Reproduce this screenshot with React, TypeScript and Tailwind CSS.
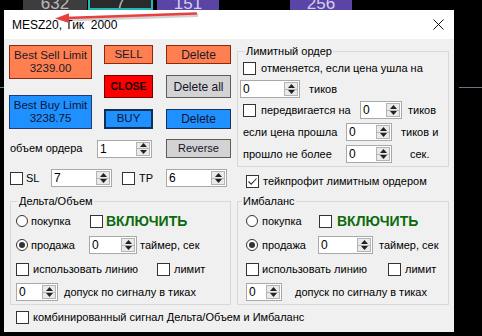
import React from 'react';

const Checkbox = ({ checked = false }: { checked?: boolean }) => (
  <span className="flex h-[13px] w-[13px] shrink-0 items-center justify-center border border-[#333333] bg-white">
    {checked && (
      <svg width="11" height="11" viewBox="0 0 11 11">
        <path d="M1.5 5.5 L4.2 8.2 L9.5 2.5" fill="none" stroke="#333333" strokeWidth="1.1" />
      </svg>
    )}
  </span>
);

const Radio = ({ checked = false }: { checked?: boolean }) => (
  <span className="flex h-[12px] w-[12px] shrink-0 items-center justify-center rounded-full border border-[#333333] bg-white">
    {checked && <span className="h-[6px] w-[6px] rounded-full bg-[#333333]" />}
  </span>
);

const Spin = ({ value, className }: { value: string; className: string }) => (
  <div className={`flex h-[18px] shrink-0 border border-[#a9a9a9] bg-white ${className}`}>
    <div className="flex-1 pl-[2px] text-[12px] leading-[16px] text-black">{value}</div>
    <div className="my-[1px] mr-[1px] flex w-[14px] flex-col border border-[#b4b4b4] bg-[#eaeaea]">
      <div className="flex flex-1 items-center justify-center border-b border-[#b4b4b4]">
        <svg width="7" height="4" viewBox="0 0 7 4"><polygon points="0,4 7,4 3.5,0" fill="#222" /></svg>
      </div>
      <div className="flex flex-1 items-center justify-center">
        <svg width="7" height="4" viewBox="0 0 7 4"><polygon points="0,0 7,0 3.5,4" fill="#222" /></svg>
      </div>
    </div>
  </div>
);

const Label = ({ children, className = '' }: { children: React.ReactNode; className?: string }) => (
  <span className={`shrink-0 whitespace-nowrap text-[11px] leading-[13px] text-black ${className}`}>{children}</span>
);

const Enable = ({ className = '' }: { className?: string }) => (
  <span className={`whitespace-nowrap text-[14px] font-bold leading-[16px] text-[#0b6b0b] ${className}`}>ВКЛЮЧИТЬ</span>
);

export default function App() {
  return (
    <div className="relative h-[336px] w-[482px] overflow-hidden bg-black font-['Liberation_Sans',Arial,sans-serif]">
      {/* chart strip behind the window */}
      <div className="flex h-[10px]">
        <div className="w-[23px]" />
        <div className="flex w-[64px] justify-center overflow-hidden bg-[#3d3d3d]">
          <span className="-mt-[5px] text-[17px] leading-none text-[#b9b9b9]">632</span>
        </div>
        <div className="ml-[1px] flex w-[65px] justify-center overflow-hidden border-x-2 border-b-2 border-[#22b8b8] bg-[#2a2a2a]">
          <span className="-mt-[5px] text-[17px] leading-none text-[#b9b9b9]">7</span>
        </div>
        <div className="ml-[4px] flex w-[62px] justify-center overflow-hidden bg-[#5a44a6]">
          <span className="-mt-[5px] text-[17px] leading-none text-[#d4d0ee]">151</span>
        </div>
        <div className="ml-[71px] flex w-[62px] justify-center overflow-hidden bg-[#5a44a6]">
          <span className="-mt-[5px] text-[17px] leading-none text-[#d4d0ee]">256</span>
        </div>
      </div>

      <div className="flex h-[322px]">
        <div className="w-[4px]">
          <div className="mt-[77px] h-px bg-[#6b7785]" />
        </div>

        {/* window */}
        <div className="flex w-[450px] flex-col">
          <div className="flex h-[29px] items-center bg-white pl-[8px] pr-[10px]">
            <span className="whitespace-pre text-[12px] text-black">MESZ20, Тик  2000</span>
            <svg className="ml-auto" width="11" height="11" viewBox="0 0 11 11">
              <path d="M0.5 0.5 L10.5 10.5 M10.5 0.5 L0.5 10.5" stroke="#111" strokeWidth="1" />
            </svg>
          </div>

          <div className="flex h-[293px] flex-col bg-[#f0f0f0] pl-[5px] pt-[6px]">
            {/* top section */}
            <div className="flex h-[145px]">
              {/* left column */}
              <div className="flex w-[222px] flex-col">
                <div className="flex h-[84px]">
                  <div className="flex w-[83px] flex-col">
                    <div className="flex h-[34px] flex-col items-center justify-center border border-[#8a2a0a] bg-[#ff7f50] text-[11.5px] leading-[13px] text-[#1a1a2a]">
                      <span>Best Sell Limit</span>
                      <span>3239.00</span>
                    </div>
                    <div className="mt-[16px] flex h-[34px] flex-col items-center justify-center border border-[#1c3d6e] bg-[#1e90ff] text-[11.5px] leading-[13px] text-[#0e1530]">
                      <span>Best Buy Limit</span>
                      <span>3238.75</span>
                    </div>
                  </div>
                  <div className="ml-[12px] flex w-[49px] flex-col">
                    <div className="flex h-[19px] items-center justify-center border border-[#8a2a0a] bg-[#ff7f50] text-[11.5px] text-[#1a1a2a]">SELL</div>
                    <div className="mt-[11px] flex h-[23px] items-center justify-center border border-[#7a0000] bg-[#ff0000] text-[10.5px] font-bold text-[#1a0000]">CLOSE</div>
                    <div className="mt-[11px] flex h-[20px] items-center justify-center border-2 border-[#0f2f57] bg-[#1e90ff] text-[11.5px] text-[#0e1530]">BUY</div>
                  </div>
                  <div className="ml-[13px] flex w-[65px] flex-col">
                    <div className="flex h-[19px] items-center justify-center border border-[#8a2a0a] bg-[#ff7f50] text-[12px] text-[#1a1a2a]">Delete</div>
                    <div className="mt-[11px] flex h-[23px] items-center justify-center border-[1.5px] border-[#5c5c5c] bg-[#d3d3d3] text-[12px] text-[#14142a]">Delete all</div>
                    <div className="mt-[11px] flex h-[20px] items-center justify-center border border-[#1c3050] bg-[#1e90ff] text-[12px] text-[#0e1530]">Delete</div>
                  </div>
                </div>

                <div className="mt-[10px] flex h-[19px] items-center">
                  <Label className="w-[88px] pl-[1px]">объем ордера</Label>
                  <Spin value="1" className="w-[55px]" />
                  <div className="ml-[14px] flex h-[19px] w-[65px] items-center justify-center border-[1.5px] border-[#5c5c5c] bg-[#d3d3d3] text-[11px] text-[#14142a]">Reverse</div>
                </div>

                <div className="mt-[11px] flex h-[18px] items-center">
                  <span className="ml-[1px]"><Checkbox /></span>
                  <Label className="ml-[3px] w-[25px]">SL</Label>
                  <Spin value="7" className="w-[61px]" />
                  <span className="ml-[10px]"><Checkbox /></span>
                  <Label className="ml-[4px] w-[27px]">TP</Label>
                  <Spin value="6" className="w-[61px]" />
                </div>
              </div>

              {/* right column */}
              <div className="ml-[6px] flex w-[212px] flex-col">
                <fieldset className="border border-[#d8d8d8] pb-[3px]">
                  <legend className="ml-[7px] px-[1px] text-[11px] leading-[13px] text-black">Лимитный ордер</legend>
                  <div className="mt-[1px] flex h-[18px] items-center">
                    <span className="ml-[5px]"><Checkbox /></span>
                    <Label className="ml-[5px]">отменяется, если цена ушла на</Label>
                  </div>
                  <div className="mt-[3px] flex h-[18px] items-center">
                    <Spin value="0" className="ml-[2px] w-[60px]" />
                    <Label className="ml-[9px]">тиков</Label>
                  </div>
                  <div className="mt-[3px] flex h-[18px] items-center">
                    <span className="ml-[5px]"><Checkbox /></span>
                    <Label className="ml-[5px] w-[99px]">передвигается на</Label>
                    <Spin value="0" className="w-[42px]" />
                    <Label className="ml-[6px]">тиков</Label>
                  </div>
                  <div className="mt-[4px] flex h-[18px] items-center">
                    <Label className="ml-[5px] w-[103px]">если цена прошла</Label>
                    <Spin value="0" className="w-[46px]" />
                    <Label className="ml-[9px]">тиков и</Label>
                  </div>
                  <div className="mt-[4px] flex h-[18px] items-center">
                    <Label className="ml-[5px] w-[103px]">прошло не более</Label>
                    <Spin value="0" className="w-[46px]" />
                    <Label className="ml-[18px]">сек.</Label>
                  </div>
                </fieldset>
                <div className="mt-[5px] flex h-[18px] items-center">
                  <span className="ml-[9px]"><Checkbox checked /></span>
                  <Label className="ml-[4px]">тейкпрофит лимитным ордером</Label>
                </div>
              </div>
            </div>

            {/* bottom groups */}
            <div className="mt-[5px] flex">
              <fieldset className="ml-[1px] w-[221px] border border-[#d8d8d8] pb-[3px]">
                <legend className="ml-[7px] px-[1px] text-[11px] leading-[13px] text-black">Дельта/Объем</legend>
                <div className="mt-[4px] flex h-[18px] items-center">
                  <span className="ml-[5px]"><Radio /></span>
                  <Label className="ml-[3px] w-[59px]">покупка</Label>
                  <Checkbox />
                  <Enable className="ml-[3px]" />
                </div>
                <div className="mt-[6px] flex h-[18px] items-center">
                  <span className="ml-[5px]"><Radio checked /></span>
                  <Label className="ml-[3px] w-[58px]">продажа</Label>
                  <Spin value="0" className="w-[48px]" />
                  <Label className="ml-[3px]">таймер, сек</Label>
                </div>
                <div className="mt-[6px] flex h-[18px] items-center">
                  <span className="ml-[5px]"><Checkbox /></span>
                  <Label className="ml-[4px] w-[124px]">использовать линию</Label>
                  <Checkbox />
                  <Label className="ml-[4px]">лимит</Label>
                </div>
                <div className="mt-[5px] flex h-[18px] items-center">
                  <Spin value="0" className="ml-[5px] w-[42px]" />
                  <Label className="ml-[6px]">допуск по сигналу в тиках</Label>
                </div>
              </fieldset>

              <fieldset className="ml-[6px] w-[212px] border border-[#d8d8d8] pb-[3px]">
                <legend className="ml-[4px] px-[1px] text-[11px] leading-[13px] text-black">Имбаланс</legend>
                <div className="mt-[4px] flex h-[18px] items-center">
                  <span className="ml-[8px]"><Radio /></span>
                  <Label className="ml-[4px] w-[57px]">покупка</Label>
                  <Checkbox />
                  <Enable className="ml-[5px]" />
                </div>
                <div className="mt-[6px] flex h-[18px] items-center">
                  <span className="ml-[8px]"><Radio checked /></span>
                  <Label className="ml-[4px] w-[56px]">продажа</Label>
                  <Spin value="0" className="w-[55px]" />
                  <Label className="ml-[6px]">таймер, сек</Label>
                </div>
                <div className="mt-[6px] flex h-[18px] items-center">
                  <span className="ml-[8px]"><Checkbox /></span>
                  <Label className="ml-[3px] w-[126px]">использовать линию</Label>
                  <Checkbox />
                  <Label className="ml-[4px]">лимит</Label>
                </div>
                <div className="mt-[5px] flex h-[18px] items-center">
                  <Spin value="0" className="ml-[8px] w-[36px]" />
                  <Label className="ml-[13px]">допуск по сигналу в тиках</Label>
                </div>
              </fieldset>
            </div>

            <div className="mt-[3px] flex h-[18px] items-center">
              <span className="ml-[7px]"><Checkbox /></span>
              <Label className="ml-[4px]">комбинированный сигнал Дельта/Объем и Имбаланс</Label>
            </div>
          </div>
        </div>

        <div className="flex-1">
          <div className="ml-[5px] mt-[77px] h-px bg-[#6b7785]" />
        </div>
      </div>

      {/* red annotation arrow */}
      <svg className="pointer-events-none absolute left-0 top-0" width="482" height="40" viewBox="0 0 482 40">
        <path d="M197 15.5 L68 20" stroke="rgba(0,0,0,0.18)" strokeWidth="3" strokeLinecap="round" />
        <path d="M196 13.5 L66 18" stroke="#e8403f" strokeWidth="2.5" strokeLinecap="round" />
        <polygon points="55,18.6 69,13.2 69,23" fill="#e8403f" />
      </svg>
    </div>
  );
}
